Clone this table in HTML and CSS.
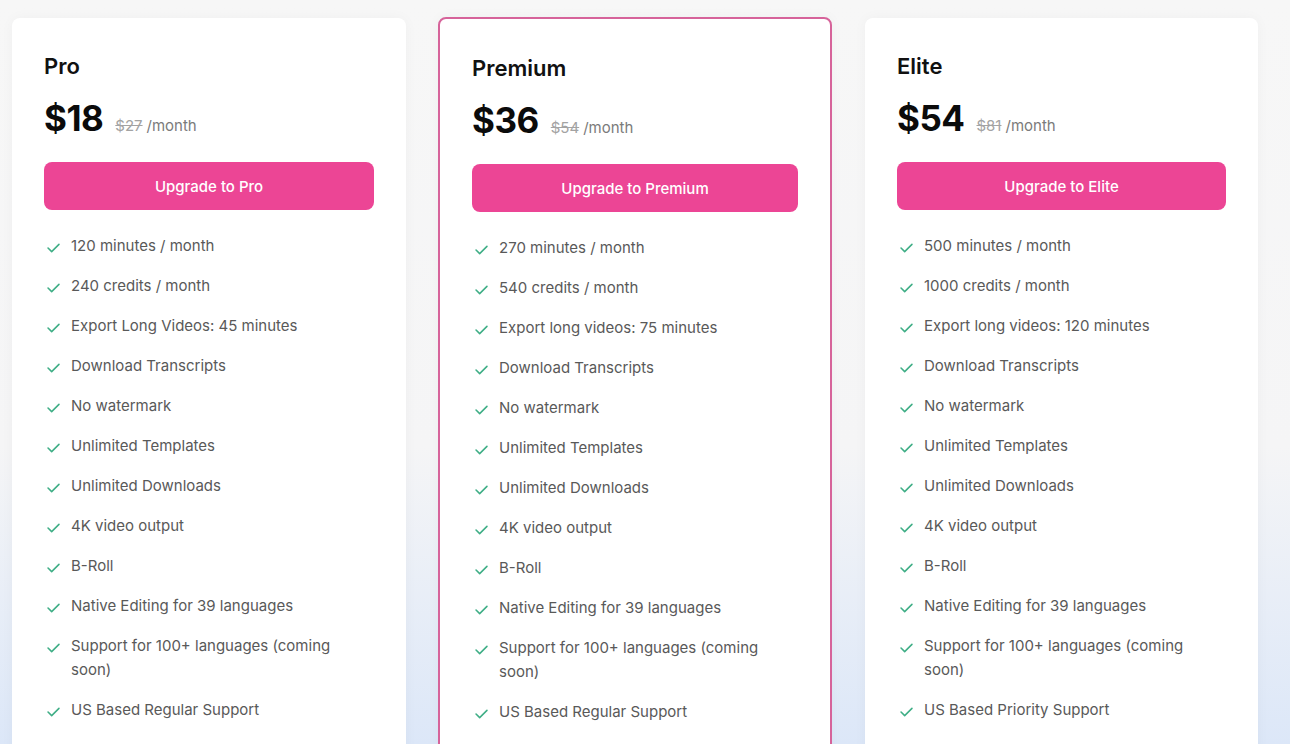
FILE: index.html
```html
<!DOCTYPE html>
<html lang="en">
<head>
    <meta charset="UTF-8">
    <meta name="viewport" content="width=device-width, initial-scale=1.0">
    <title>Pricing</title>
    <link rel="stylesheet" href="styles.css">
</head>
<body>
    <div class="plans">
        <!-- Pro -->
        <div class="plan">
            <h2 class="plan-name">Pro</h2>
            <div class="price">
                <span class="amount">$18</span>
                <span class="old">$27</span>
                <span class="per">/month</span>
            </div>
            <button class="upgrade">Upgrade to Pro</button>
            <ul class="features">
                <li><svg class="check" viewBox="0 0 14 11"><polyline points="1,5.5 5,9.5 13,1.5"/></svg><span>120 minutes / month</span></li>
                <li><svg class="check" viewBox="0 0 14 11"><polyline points="1,5.5 5,9.5 13,1.5"/></svg><span>240 credits / month</span></li>
                <li><svg class="check" viewBox="0 0 14 11"><polyline points="1,5.5 5,9.5 13,1.5"/></svg><span>Export Long Videos: 45 minutes</span></li>
                <li><svg class="check" viewBox="0 0 14 11"><polyline points="1,5.5 5,9.5 13,1.5"/></svg><span>Download Transcripts</span></li>
                <li><svg class="check" viewBox="0 0 14 11"><polyline points="1,5.5 5,9.5 13,1.5"/></svg><span>No watermark</span></li>
                <li><svg class="check" viewBox="0 0 14 11"><polyline points="1,5.5 5,9.5 13,1.5"/></svg><span>Unlimited Templates</span></li>
                <li><svg class="check" viewBox="0 0 14 11"><polyline points="1,5.5 5,9.5 13,1.5"/></svg><span>Unlimited Downloads</span></li>
                <li><svg class="check" viewBox="0 0 14 11"><polyline points="1,5.5 5,9.5 13,1.5"/></svg><span>4K video output</span></li>
                <li><svg class="check" viewBox="0 0 14 11"><polyline points="1,5.5 5,9.5 13,1.5"/></svg><span>B-Roll</span></li>
                <li><svg class="check" viewBox="0 0 14 11"><polyline points="1,5.5 5,9.5 13,1.5"/></svg><span>Native Editing for 39 languages</span></li>
                <li><svg class="check" viewBox="0 0 14 11"><polyline points="1,5.5 5,9.5 13,1.5"/></svg><span>Support for 100+ languages (coming soon)</span></li>
                <li><svg class="check" viewBox="0 0 14 11"><polyline points="1,5.5 5,9.5 13,1.5"/></svg><span>US Based Regular Support</span></li>
            </ul>
        </div>

        <!-- Premium -->
        <div class="plan featured">
            <h2 class="plan-name">Premium</h2>
            <div class="price">
                <span class="amount">$36</span>
                <span class="old">$54</span>
                <span class="per">/month</span>
            </div>
            <button class="upgrade">Upgrade to Premium</button>
            <ul class="features">
                <li><svg class="check" viewBox="0 0 14 11"><polyline points="1,5.5 5,9.5 13,1.5"/></svg><span>270 minutes / month</span></li>
                <li><svg class="check" viewBox="0 0 14 11"><polyline points="1,5.5 5,9.5 13,1.5"/></svg><span>540 credits / month</span></li>
                <li><svg class="check" viewBox="0 0 14 11"><polyline points="1,5.5 5,9.5 13,1.5"/></svg><span>Export long videos: 75 minutes</span></li>
                <li><svg class="check" viewBox="0 0 14 11"><polyline points="1,5.5 5,9.5 13,1.5"/></svg><span>Download Transcripts</span></li>
                <li><svg class="check" viewBox="0 0 14 11"><polyline points="1,5.5 5,9.5 13,1.5"/></svg><span>No watermark</span></li>
                <li><svg class="check" viewBox="0 0 14 11"><polyline points="1,5.5 5,9.5 13,1.5"/></svg><span>Unlimited Templates</span></li>
                <li><svg class="check" viewBox="0 0 14 11"><polyline points="1,5.5 5,9.5 13,1.5"/></svg><span>Unlimited Downloads</span></li>
                <li><svg class="check" viewBox="0 0 14 11"><polyline points="1,5.5 5,9.5 13,1.5"/></svg><span>4K video output</span></li>
                <li><svg class="check" viewBox="0 0 14 11"><polyline points="1,5.5 5,9.5 13,1.5"/></svg><span>B-Roll</span></li>
                <li><svg class="check" viewBox="0 0 14 11"><polyline points="1,5.5 5,9.5 13,1.5"/></svg><span>Native Editing for 39 languages</span></li>
                <li><svg class="check" viewBox="0 0 14 11"><polyline points="1,5.5 5,9.5 13,1.5"/></svg><span>Support for 100+ languages (coming soon)</span></li>
                <li><svg class="check" viewBox="0 0 14 11"><polyline points="1,5.5 5,9.5 13,1.5"/></svg><span>US Based Regular Support</span></li>
            </ul>
        </div>

        <!-- Elite -->
        <div class="plan">
            <h2 class="plan-name">Elite</h2>
            <div class="price">
                <span class="amount">$54</span>
                <span class="old">$81</span>
                <span class="per">/month</span>
            </div>
            <button class="upgrade">Upgrade to Elite</button>
            <ul class="features">
                <li><svg class="check" viewBox="0 0 14 11"><polyline points="1,5.5 5,9.5 13,1.5"/></svg><span>500 minutes / month</span></li>
                <li><svg class="check" viewBox="0 0 14 11"><polyline points="1,5.5 5,9.5 13,1.5"/></svg><span>1000 credits / month</span></li>
                <li><svg class="check" viewBox="0 0 14 11"><polyline points="1,5.5 5,9.5 13,1.5"/></svg><span>Export long videos: 120 minutes</span></li>
                <li><svg class="check" viewBox="0 0 14 11"><polyline points="1,5.5 5,9.5 13,1.5"/></svg><span>Download Transcripts</span></li>
                <li><svg class="check" viewBox="0 0 14 11"><polyline points="1,5.5 5,9.5 13,1.5"/></svg><span>No watermark</span></li>
                <li><svg class="check" viewBox="0 0 14 11"><polyline points="1,5.5 5,9.5 13,1.5"/></svg><span>Unlimited Templates</span></li>
                <li><svg class="check" viewBox="0 0 14 11"><polyline points="1,5.5 5,9.5 13,1.5"/></svg><span>Unlimited Downloads</span></li>
                <li><svg class="check" viewBox="0 0 14 11"><polyline points="1,5.5 5,9.5 13,1.5"/></svg><span>4K video output</span></li>
                <li><svg class="check" viewBox="0 0 14 11"><polyline points="1,5.5 5,9.5 13,1.5"/></svg><span>B-Roll</span></li>
                <li><svg class="check" viewBox="0 0 14 11"><polyline points="1,5.5 5,9.5 13,1.5"/></svg><span>Native Editing for 39 languages</span></li>
                <li><svg class="check" viewBox="0 0 14 11"><polyline points="1,5.5 5,9.5 13,1.5"/></svg><span>Support for 100+ languages (coming soon)</span></li>
                <li><svg class="check" viewBox="0 0 14 11"><polyline points="1,5.5 5,9.5 13,1.5"/></svg><span>US Based Priority Support</span></li>
            </ul>
        </div>
    </div>
</body>
</html>
```

FILE: styles.css
```css
html, body {
    height: 100%;
}
body {
    margin: 0;
    font-family: Inter, 'Noto Sans', sans-serif;
    background: linear-gradient(to bottom, #f7f7f7 0%, #f5f5f6 60%, #dce7f8 100%);
    overflow: hidden;
}
.plans {
    display: grid;
    grid-template-columns: 394px 394px 394px;
    column-gap: 32px;
    padding: 18px 0 0 12px;
}
.plan {
    background: #fff;
    border-radius: 8px;
    padding: 34px 32px 60px;
    box-shadow: 0 0 14px rgba(0,0,0,0.035);
}
.plan.featured {
    border: 2px solid #d6639a;
    margin-top: -1px;
    padding: 35px 32px 60px;
}
.plan:last-child {
    margin-left: 1px;
}
.plan-name {
    margin: 0 0 16px;
    font-size: 22px;
    line-height: 28px;
    font-weight: 600;
    color: #111;
}
.price {
    display: flex;
    align-items: baseline;
    height: 44px;
    margin-bottom: 22px;
}
.amount {
    font-size: 35px;
    line-height: 44px;
    font-weight: 700;
    color: #0b0b0b;
    letter-spacing: -0.5px;
    margin-right: 12px;
}
.old {
    font-size: 15px;
    color: #a3a3a3;
    text-decoration: line-through;
    margin-right: 4px;
}
.per {
    font-size: 15px;
    color: #7b7b7b;
}
.upgrade {
    display: block;
    width: 100%;
    height: 48px;
    border: none;
    border-radius: 8px;
    background: #ec4595;
    color: #fff;
    font-family: inherit;
    font-size: 15px;
    font-weight: 500;
    cursor: pointer;
}
.upgrade:hover {
    background: #db3585;
}
.features {
    list-style: none;
    margin: 24px 0 0;
    padding: 0 36px 0 0;
    display: flex;
    flex-direction: column;
    gap: 16px;
}
.features li {
    display: flex;
    align-items: flex-start;
    gap: 11px;
    font-size: 15px;
    line-height: 24px;
    color: #595959;
}
.check {
    flex: none;
    width: 13px;
    height: 10px;
    margin: 9px 0 0 3px;
    fill: none;
    stroke: #3fae86;
    stroke-width: 1.7;
    stroke-linecap: round;
    stroke-linejoin: round;
}
```
